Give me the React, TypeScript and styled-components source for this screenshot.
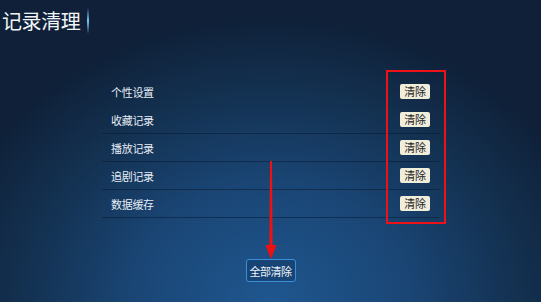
import * as React from 'react';
import styled, { createGlobalStyle } from 'styled-components';

const GlobalStyle = createGlobalStyle`
    html, body {
        margin: 0;
        padding: 0;
        background: #0f1f38;
    }
    body {
        font-family: "Noto Sans CJK SC", "Noto Sans", sans-serif;
    }
`;

const Page = styled.div`
    position: relative;
    width: 541px;
    height: 302px;
    overflow: hidden;
    display: flex;
    flex-direction: column;
    background:
        radial-gradient(ellipse 62% 95% at 50% 100%, #1f578f 0%, #1a4676 40%, #13304f 75%, #0f2038 100%);
`;

const Header = styled.div`
    height: 42px;
    display: flex;
    align-items: center;
    padding-left: 2px;
`;

const Title = styled.h1`
    margin: 0;
    font-size: 20px;
    font-weight: 400;
    color: #f2f5f8;
    line-height: 1;
    letter-spacing: -0.4px;
`;

const Divider = styled.span`
    width: 2px;
    height: 26px;
    margin-left: 7px;
    background: linear-gradient(to bottom, rgba(90, 170, 230, 0), #7cc4f5 50%, rgba(90, 170, 230, 0));
`;

const List = styled.div`
    width: 337px;
    margin: 36px auto 0;
`;

const Row = styled.div`
    height: 28px;
    box-sizing: border-box;
    display: flex;
    align-items: center;
    justify-content: space-between;
    padding: 0 9px;
    border-bottom: 1px solid rgba(8, 22, 42, ${(p: { first?: boolean }) => (p.first ? 0.1 : 0.5)});
`;

const Label = styled.span`
    font-size: 11px;
    color: #e6edf5;
    letter-spacing: -0.3px;
`;

const ClearButton = styled.button`
    height: 15px;
    width: 30px;
    padding: 0;
    border: none;
    border-radius: 2px;
    background: #f1eddb;
    color: #1e1e1e;
    font-family: inherit;
    font-size: 11px;
    line-height: 15px;
    letter-spacing: -0.3px;
    cursor: pointer;
`;

const Footer = styled.div`
    display: flex;
    justify-content: center;
    margin-top: 41px;
`;

const ClearAllButton = styled.button`
    height: 23px;
    width: 50px;
    padding: 0;
    box-sizing: border-box;
    border: 1.5px solid #3a8fd8;
    border-radius: 3px;
    background: rgba(20, 60, 105, 0.6);
    color: #eef3f8;
    font-family: inherit;
    font-size: 11px;
    letter-spacing: -0.5px;
    cursor: pointer;
`;

const MarkBox = styled.div`
    position: absolute;
    left: 386px;
    top: 70px;
    width: 60px;
    height: 154px;
    box-sizing: border-box;
    border: 2px solid #ee1118;
    pointer-events: none;
`;

const Arrow = styled.svg`
    position: absolute;
    left: 265px;
    top: 161px;
    pointer-events: none;
`;

const items = ['个性设置', '收藏记录', '播放记录', '追剧记录', '数据缓存'];

const App = () => (
    <>
        <GlobalStyle />
        <Page>
            <Header>
                <Title>记录清理</Title>
                <Divider />
            </Header>
            <List>
                {items.map((name, i) => (
                    <Row key={name} first={i === 0}>
                        <Label>{name}</Label>
                        <ClearButton>清除</ClearButton>
                    </Row>
                ))}
            </List>
            <Footer>
                <ClearAllButton>全部清除</ClearAllButton>
            </Footer>
            <MarkBox />
            <Arrow width="12" height="100" viewBox="0 0 12 100">
                <polygon points="5,0 7,0 7.6,86 4.4,86" fill="#f01010" />
                <polygon points="0.5,84 11.5,84 6,98" fill="#f01010" />
            </Arrow>
        </Page>
    </>
);

export default App;
